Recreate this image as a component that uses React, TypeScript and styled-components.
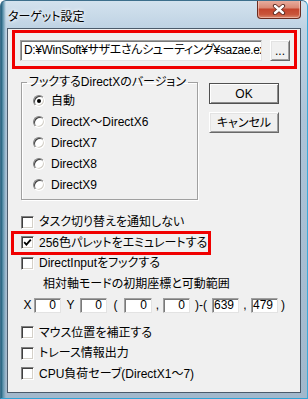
import styled, { createGlobalStyle } from "styled-components";

const GlobalStyle = createGlobalStyle`
  html, body {
    margin: 0;
    padding: 0;
    background: #ffffff;
  }
  body {
    font-family: "Liberation Sans", "Noto Sans CJK JP", sans-serif;
    font-size: 12px;
    color: #000;
    font-feature-settings: "palt";
  }
  * {
    box-sizing: border-box;
  }
`;

const Window = styled.div`
  width: 308px;
  height: 399px;
  display: flex;
  flex-direction: column;
  border: 1px solid #3d6f8c;
  border-bottom-color: #2fa3d6;
  border-right-color: #3aa9d8;
  border-radius: 6px 6px 0 0;
  overflow: hidden;
  background:
    linear-gradient(90deg, #1e5c78 0px, #5e93ad 2px, rgba(169, 193, 212, 0) 5px),
    linear-gradient(180deg, #d3e2ee 0%, #bed2e3 7%, #aec4d8 30%, #a2b8cc 100%);
`;

const TitleBar = styled.div`
  height: 27px;
  flex-shrink: 0;
  display: flex;
  align-items: flex-start;
`;

const Title = styled.div`
  padding: 9px 0 0 7px;
  font-size: 12px;
  line-height: 14px;
  text-shadow: 0 0 5px #ffffff, 0 0 3px #ffffff;
  flex: 1;
`;

const CloseButton = styled.div`
  width: 44px;
  height: 19px;
  margin: -1px 6px 0 0;
  display: flex;
  align-items: center;
  justify-content: center;
  border: 1px solid #6a2b1f;
  border-top: none;
  border-radius: 0 0 4px 4px;
  background: linear-gradient(
    180deg,
    #e9b1a3 0%,
    #db8a76 42%,
    #c4452d 52%,
    #c9553a 80%,
    #d98a70 100%
  );
  box-shadow: inset 0 0 0 1px rgba(255, 220, 210, 0.5);
`;

/* client area: plain block flow, nothing in it may shrink */
const Client = styled.div`
  flex: 1;
  margin: 0 6px 5px 6px;
  border: 1px solid #4b5a6a;
  background: #f0f0f0;
  overflow: hidden;
`;

const PathFrame = styled.div`
  margin: 1px 3px 0 4px;
  height: 39px;
  border: 3px solid #f00000;
  padding: 7px 4px 0 5px;
  display: flex;
  gap: 8px;
`;

const PathField = styled.div`
  flex: 1;
  height: 21px;
  padding: 0 0 0 3px;
  background: #ffffff;
  border: 1px solid;
  border-color: #a0a0a0 #e3e3e3 #e3e3e3 #a0a0a0;
  box-shadow: inset 1px 1px 0 #7a7a7a;
  line-height: 19px;
  letter-spacing: -0.35px;
  white-space: nowrap;
  overflow: hidden;
`;

const PushButton = styled.div<{ $default?: boolean; $w: number; $h: number }>`
  width: ${(p) => p.$w}px;
  height: ${(p) => p.$h}px;
  flex-shrink: 0;
  display: flex;
  align-items: center;
  justify-content: center;
  background: #f0f0f0;
  border: 1px solid;
  border-color: ${(p) =>
    p.$default ? "#505050" : "#ffffff #696969 #696969 #ffffff"};
  box-shadow: ${(p) =>
    p.$default
      ? "inset 1px 1px 0 #ffffff, inset -1px -1px 0 #8c8c8c"
      : "inset 1px 1px 0 #e3e3e3, inset -1px -1px 0 #a0a0a0"};
  line-height: 14px;
`;

const Middle = styled.div`
  display: flex;
  align-items: flex-start;
  margin-top: 6px;
`;

const GroupBox = styled.fieldset`
  margin: 0 0 0 13px;
  width: 177px;
  padding: 1px 0 4px 11px;
  border: 1px solid #a0a0a0;
  box-shadow: inset 1px 1px 0 #ffffff, 1px 1px 0 #ffffff;
  min-width: 0;
`;

const Legend = styled.legend`
  margin-left: -6px;
  padding: 0 2px;
  line-height: 14px;
  font-size: 12px;
  white-space: nowrap;
`;

const ButtonColumn = styled.div`
  display: flex;
  flex-direction: column;
  gap: 8px;
  margin: 8px 0 0 11px;
`;

const OptionRow = styled.div`
  height: 21px;
  display: flex;
  align-items: center;
  line-height: 14px;
`;

const Radio = styled.span<{ $on?: boolean }>`
  width: 12px;
  height: 12px;
  margin-right: 6px;
  border-radius: 50%;
  border: 1px solid;
  border-color: #808080 #ffffff #ffffff #808080;
  background: #ffffff;
  box-shadow: inset 1px 1px 0 #404040, inset -1px -1px 0 #d4d0c8;
  display: flex;
  align-items: center;
  justify-content: center;
  &::after {
    content: "";
    display: ${(p) => (p.$on ? "block" : "none")};
    width: 4px;
    height: 4px;
    border-radius: 50%;
    background: #000;
  }
`;

const Options = styled.div`
  margin-top: 12px;
`;

const CheckRow = styled.div<{ $highlight?: boolean }>`
  height: ${(p) => (p.$highlight ? 23.5 : 20.5)}px;
  display: flex;
  align-items: center;
  line-height: 14px;
  padding-left: ${(p) => (p.$highlight ? 7 : 13)}px;
  ${(p) =>
    p.$highlight &&
    `
    width: 200px;
    margin: -1.5px 0 -1.5px 3px;
    border: 3px solid #f00000;
  `}
`;

const CheckBox = styled.span`
  width: 13px;
  height: 13px;
  margin-right: 5px;
  border: 1px solid;
  border-color: #808080 #ffffff #ffffff #808080;
  background: #ffffff;
  box-shadow: inset 1px 1px 0 #404040, inset -1px -1px 0 #d4d0c8;
  display: flex;
  align-items: center;
  justify-content: center;
  flex-shrink: 0;
`;

const Caption = styled.div`
  height: 21px;
  padding-left: 35px;
  display: flex;
  align-items: center;
  line-height: 14px;
`;

const CoordRow = styled.div`
  height: 21px;
  padding-left: 13px;
  margin-bottom: 7px;
  display: flex;
  align-items: center;
  line-height: 14px;
`;

const Sep = styled.span<{ $w: number }>`
  width: ${(p) => p.$w}px;
  text-align: center;
`;

const CoordField = styled.span<{ $w?: number }>`
  width: ${(p) => p.$w ?? 27}px;
  height: 15px;
  padding-right: 4px;
  text-align: right;
  line-height: 13px;
  background: #ffffff;
  border: 1px solid;
  border-color: #a0a0a0 #e3e3e3 #e3e3e3 #a0a0a0;
  box-shadow: inset 1px 1px 0 #7a7a7a;
`;

const CloseIcon = () => (
  <svg width="14" height="11" viewBox="0 0 14 11">
    <path d="M3 2 L11 9 M11 2 L3 9" stroke="#5b2a22" strokeWidth="4.2" strokeLinecap="round" />
    <path d="M3 2 L11 9 M11 2 L3 9" stroke="#ffffff" strokeWidth="2.4" strokeLinecap="round" />
  </svg>
);

const CheckMark = () => (
  <svg width="9" height="9" viewBox="0 0 9 9">
    <path d="M1.2 4.2 L3.4 6.6 L7.8 1.6" fill="none" stroke="#000" strokeWidth="1.8" />
  </svg>
);

const versions = ["自動", "DirectX〜DirectX6", "DirectX7", "DirectX8", "DirectX9"];

function Check({ label, checked, highlight }: { label: string; checked?: boolean; highlight?: boolean }) {
  return (
    <CheckRow $highlight={highlight}>
      <CheckBox>{checked && <CheckMark />}</CheckBox>
      <span>{label}</span>
    </CheckRow>
  );
}

export default function App() {
  return (
    <>
      <GlobalStyle />
      <Window>
        <TitleBar>
          <Title>ターゲット設定</Title>
          <CloseButton>
            <CloseIcon />
          </CloseButton>
        </TitleBar>
        <Client>
          <PathFrame>
            <PathField>D:¥WinSoft¥サザエさんシューティング¥sazae.exe</PathField>
            <PushButton $w={20} $h={21}>...</PushButton>
          </PathFrame>
          <Middle>
            <GroupBox>
              <Legend>フックするDirectXのバージョン</Legend>
              {versions.map((v, i) => (
                <OptionRow key={v}>
                  <Radio $on={i === 0} />
                  <span>{v}</span>
                </OptionRow>
              ))}
            </GroupBox>
            <ButtonColumn>
              <PushButton $default $w={70} $h={21}>OK</PushButton>
              <PushButton $w={70} $h={21}>キャンセル</PushButton>
            </ButtonColumn>
          </Middle>
          <Options>
            <Check label="タスク切り替えを通知しない" />
            <Check label="256色パレットをエミュレートする" checked highlight />
            <Check label="DirectInputをフックする" />
            <Caption>相対軸モードの初期座標と可動範囲</Caption>
            <CoordRow>
              <Sep $w={13}>X</Sep>
              <CoordField>0</CoordField>
              <Sep $w={19}>Y</Sep>
              <CoordField>0</CoordField>
              <Sep $w={17}>(</Sep>
              <CoordField $w={28}>0</CoordField>
              <Sep $w={11}>,</Sep>
              <CoordField>0</CoordField>
              <Sep $w={22}>)-(</Sep>
              <CoordField>639</CoordField>
              <Sep $w={12}>,</Sep>
              <CoordField>479</CoordField>
              <Sep $w={10}>)</Sep>
            </CoordRow>
            <Check label="マウス位置を補正する" />
            <Check label="トレース情報出力" />
            <Check label="CPU負荷セーブ(DirectX1〜7)" />
          </Options>
        </Client>
      </Window>
    </>
  );
}
